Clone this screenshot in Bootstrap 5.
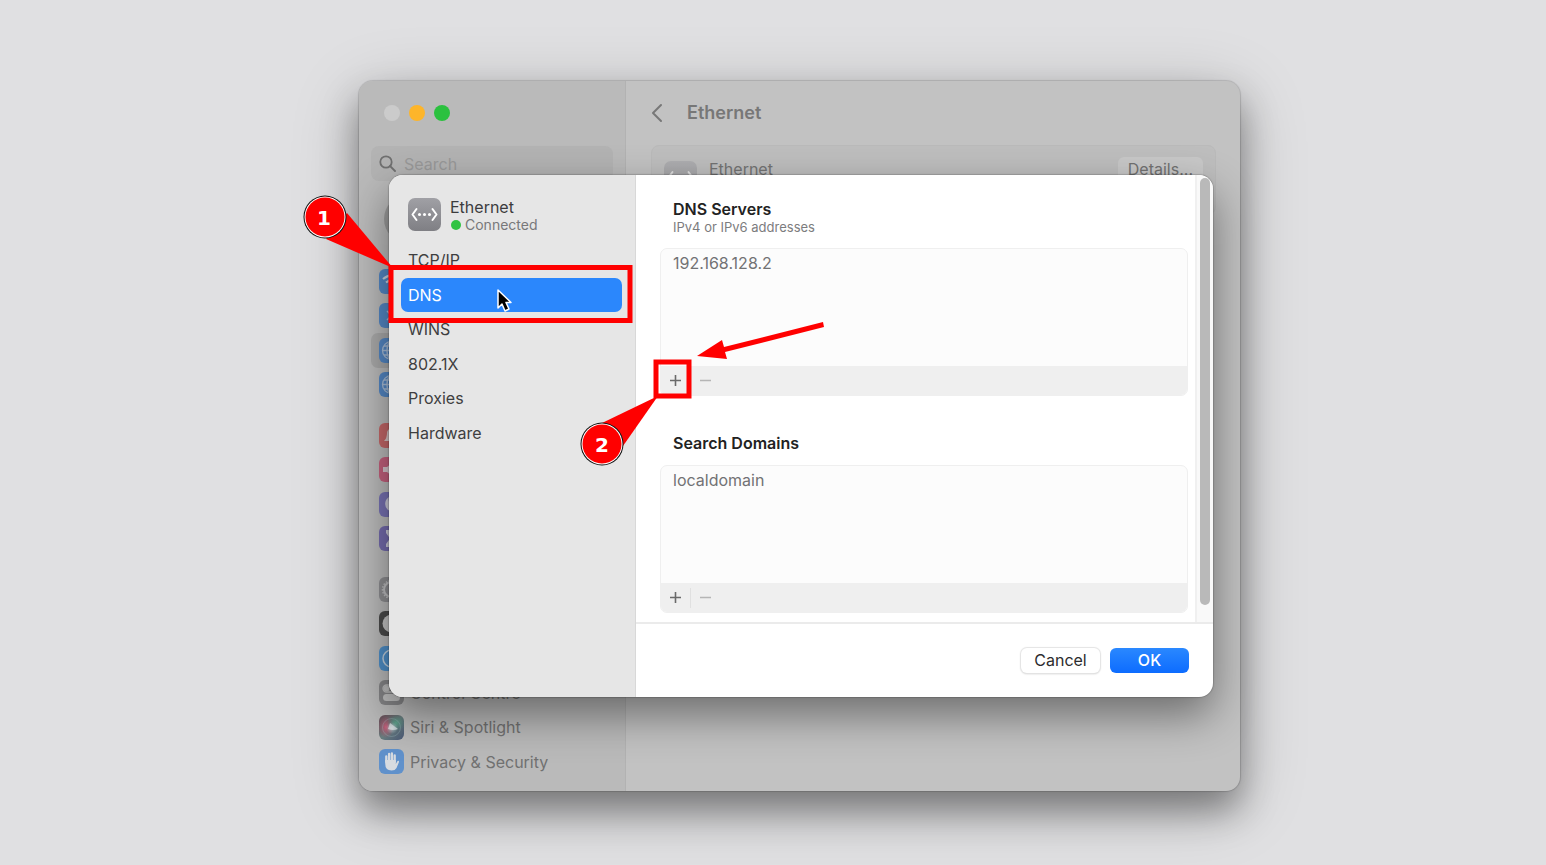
<!DOCTYPE html>
<html lang="en">
<head>
<meta charset="utf-8">
<meta name="viewport" content="width=device-width, initial-scale=1">
<title>Ethernet – DNS settings</title>
<link href="https://cdn.jsdelivr.net/npm/bootstrap@5.3.0/dist/css/bootstrap.min.css" rel="stylesheet">
<style>
body{font-family:Inter,"Liberation Sans",sans-serif;font-size:16px;line-height:20px;background:#e0e0e2;color:#3c3c3e}
.desktop{min-height:100vh;padding:81px 0 74px 53px}
.window{max-width:881px;border-radius:14px;background:#c2c2c2;box-shadow:0 0 1px 1px rgba(0,0,0,.14),0 20px 36px rgba(0,0,0,.38),0 14px 70px rgba(0,0,0,.2);color:#737373}
.side{width:267px;background:#bababa;border-right:1px solid #b2b2b2;border-radius:14px 0 0 14px;padding:24px 12px 12px 12px}
.lights{padding:0 0 0 13px;gap:9px}
.lights button{width:16px;height:16px;border:0;border-radius:50%;padding:0}
.lights .l-close{background:#cbcbcb}.lights .l-min{background:#fdb52a}.lights .l-zoom{background:#2bc13f}
.search{height:35px;margin-top:25px;padding:0 8px;gap:4px;background:#b3b3b3;border-radius:8px}
.search input,.search input:focus{background:none;border:0;box-shadow:none;padding:0 4px;font-size:16px;line-height:20px;color:#737373}
.search input::placeholder{color:#999;opacity:1}
.avatar{width:48px;height:48px;margin:14px 0 21px 13px;border-radius:50%;background:#999}
.group-4,.group-6{display:flex;flex-direction:column}
.group-4{height:138px;margin-bottom:16px}
.group-6{height:207px}
.group-4 a,.group-6 a{flex:1;display:flex;align-items:center;gap:6px;padding-left:8px;color:#717171;text-decoration:none;border-radius:7px}
.group-4 a.current{background:#a9a9a9}
.ico{width:25px;height:25px;flex:none}
.pane{padding:20px 24px 20px 25px}
.pane-title{font-size:18px;line-height:24px;font-weight:600;color:#777;margin:0}
.service{margin-top:20px;height:70px;border-radius:8px;background:#bebebe;border:1px solid #bababa;padding:11px 12px}
.service .name{margin:2px 0 0 12px}
.btn-details{background:#c8c8c8;border:0;border-radius:6px;height:24px;padding:0 10px;font-size:16px;line-height:24px;color:#727272}
.sheet{position:absolute;inset:94px 27px 94px 30px;border-radius:14px;background:#fff;color:#3c3c3e;box-shadow:0 0 1px 1px rgba(0,0,0,.16),0 18px 44px rgba(0,0,0,.44)}
.sheet-side{width:247px;background:#e6e6e6;border-right:1px solid #d8d8d8;padding:23px 13px 0 12px}
.sheet-head{padding:0 7px;height:45px;gap:9px}
.sheet-head .who{margin-top:-1px}
.sheet-head .state{font-size:14px;line-height:16px;color:#78787a}
.dot{width:10px;height:10px;border-radius:50%;background:#30c342;margin-left:1px}
.tabs-col{height:207px}
.tabs-col button{flex:1;border:0;background:none;text-align:left;padding:0 7px;border-radius:7px;color:#3e3e40}
.tabs-col button.active{background:#2b87fc;color:#fff}
.content{padding:24px 7px 9px 24px}
.content h2{font-size:16px;line-height:20px;font-weight:600;color:#222;margin:0 0 0 13px}
.content .hint{font-size:13px;line-height:16px;color:#7c7c7e;margin:0 0 13px 13px}
.listbox{border:1px solid #efefef;border-radius:7px;background:#fcfcfc;overflow:hidden}
.listbox ul{height:117px;margin:0;padding:4px 12px;color:#727274}
.listbox .tools{height:29px;background:#efefef}
.tools button{width:29px;border:0;background:none;padding:0;color:#6a6a6a;display:grid;place-items:center}
.tools button~button{color:#b5b5b5}
.tools .rule{width:1px;height:20px;background:#e0e0e0}
.second{margin-top:37px}
.second .listbox{margin-top:12px}
.track{width:18px;background:#f9f9f9;border-left:2px solid #f0f0f0;border-radius:0 14px 0 0;padding:3px 3px 17px 3px}
.thumb{width:10px;height:100%;border-radius:5px;background:#b9b9b9}
.actions{border-top:2px solid #ebebeb;height:75px;padding:0 24px 0 0;gap:10px}
.actions .btn{width:79px;height:25px;padding:0;font-size:16px;line-height:23px;border-radius:6px;border:0}
.b-cancel,.b-cancel:hover{background:#fff;color:#2c2c2e;box-shadow:0 0 1px 1px #e4e4e4,0 1px 2px rgba(0,0,0,.2)}
.actions .b-ok,.b-ok:hover{background:linear-gradient(#2a88ff,#0d6cff);color:#fff;font-weight:500}
.notes{position:absolute;left:0;top:0;overflow:visible;pointer-events:none}
.notes text{font:bold 20px "DejaVu Sans",sans-serif;fill:#fff;text-anchor:middle}
</style>
</head>
<body>
<svg width="0" height="0" class="position-absolute" aria-hidden="true">
  <defs>
    <linearGradient id="gray" x2="0" y2="1"><stop stop-color="#a0a0a5"/><stop offset="1" stop-color="#7f7f84"/></linearGradient>
    <linearGradient id="siri" x2="1" y2="1"><stop stop-color="#6b4a55"/><stop offset=".5" stop-color="#6a7f80"/><stop offset="1" stop-color="#4b5a78"/></linearGradient>
    <radialGradient id="pink"><stop stop-color="#c9607c"/><stop offset="1" stop-color="#b54c68" stop-opacity="0"/></radialGradient>
    <radialGradient id="teal"><stop stop-color="#5fa58c"/><stop offset="1" stop-color="#4f8c80" stop-opacity="0"/></radialGradient>
    <radialGradient id="glow"><stop stop-color="#e6eaec"/><stop offset="1" stop-color="#b9c9d4" stop-opacity="0"/></radialGradient>
    <symbol id="eth" viewBox="0 0 33 33"><rect width="33" height="33" rx="7" fill="url(#gray)"/><path d="M8.500 11 4.500 16.500 8.500 22M24.500 11l4 5.500-4 5.500" fill="none" stroke="#fff" stroke-width="2" stroke-linecap="round" stroke-linejoin="round"/><g fill="#fff"><circle cx="11.500" cy="16.500" r="1.500"/><circle cx="16.500" cy="16.500" r="1.500"/><circle cx="21.500" cy="16.500" r="1.500"/></g></symbol>
    <symbol id="globe" viewBox="0 0 25 25"><rect width="25" height="25" rx="6" fill="#5487c4"/><g fill="none" stroke="#a9bdd6" stroke-width="1.300"><circle cx="12.500" cy="12.500" r="9"/><ellipse cx="12.500" cy="12.500" rx="4.500" ry="9"/><path d="M3.500 12.500h18M5 8h15M5 17h15M12.500 3.500v18"/></g></symbol>
  </defs>
</svg>
<main class="desktop d-flex justify-content-center align-items-start">
  <div class="window w-100 position-relative d-flex">
    <aside class="side flex-shrink-0">
      <div class="lights d-flex">
        <button class="l-close" aria-label="Close"></button><button class="l-min" aria-label="Minimise"></button><button class="l-zoom" aria-label="Zoom"></button>
      </div>
      <div class="search d-flex align-items-center">
        <svg width="17" height="17" viewBox="0 0 17 17" class="flex-shrink-0" fill="none" stroke="#707070" stroke-width="1.800" stroke-linecap="round"><circle cx="7" cy="7" r="5.700"/><path d="m11 11 5 5"/></svg>
        <input class="form-control" type="search" placeholder="Search" aria-label="Search settings">
      </div>
      <div class="avatar"></div>
      <nav class="group-4" aria-label="Network">
        <a href="#" aria-label="Wi-Fi"><svg class="ico" viewBox="0 0 25 25"><rect width="25" height="25" rx="6" fill="#5487c4"/><path d="M4 10q8.500-7 17 0M7 13.500q5.500-4.500 11 0" fill="none" stroke="#c9d3df" stroke-width="2.200"/><circle cx="12.500" cy="17" r="2" fill="#c9d3df"/></svg></a>
        <a href="#" aria-label="Bluetooth"><svg class="ico" viewBox="0 0 25 25"><rect width="25" height="25" rx="6" fill="#5487c4"/><path d="m8 8 9 9-4.500 4V4L17 8l-9 9" fill="none" stroke="#a9bdd6" stroke-width="1.500"/></svg></a>
        <a href="#" class="current" aria-label="Network"><svg class="ico"><use href="#globe"/></svg></a>
        <a href="#" aria-label="VPN"><svg class="ico"><use href="#globe"/></svg></a>
      </nav>
      <nav class="group-4" aria-label="Alerts">
        <a href="#" aria-label="Notifications"><svg class="ico" viewBox="0 0 25 25"><rect width="25" height="25" rx="6" fill="#c46768"/><path d="M5 18q3-3 3-8a4.500 4.500 0 0 1 9 0q0 5 3 8z" fill="#d6c5c5"/></svg></a>
        <a href="#" aria-label="Sound"><svg class="ico" viewBox="0 0 25 25"><rect width="25" height="25" rx="6" fill="#c4607d"/><path d="M4 10h4l6-5v15l-6-5H4z" fill="#d6c5cc"/></svg></a>
        <a href="#" aria-label="Focus"><svg class="ico" viewBox="0 0 25 25"><rect width="25" height="25" rx="6" fill="#7772b3"/><path d="M10 5a8 8 0 1 0 11 11A9 9 0 0 1 10 5" fill="#c9c8d6"/></svg></a>
        <a href="#" aria-label="Screen Time"><svg class="ico" viewBox="0 0 25 25"><rect width="25" height="25" rx="6" fill="#746bad"/><path d="M7 4h11v3l-4 5.500 4 5.500v3H7v-3l4-5.500L7 7z" fill="#c9c8d6"/></svg></a>
      </nav>
      <nav class="group-6" aria-label="System">
        <a href="#" aria-label="General"><svg class="ico" viewBox="0 0 25 25"><rect width="25" height="25" rx="6" fill="#8d8d90"/><circle cx="12.500" cy="12.500" r="7.500" fill="none" stroke="#bdbdbf" stroke-width="2"/><circle cx="12.500" cy="12.500" r="9" fill="none" stroke="#bdbdbf" stroke-width="1.500" stroke-dasharray="1.500 1.500"/></svg></a>
        <a href="#" aria-label="Appearance"><svg class="ico" viewBox="0 0 25 25"><rect width="25" height="25" rx="6" fill="#4b4b4b"/><circle cx="12.500" cy="12.500" r="9" fill="#c4c4c4"/><path d="M12.500 5a7.500 7.500 0 0 1 0 15z" fill="#4b4b4b"/></svg></a>
        <a href="#" aria-label="Accessibility"><svg class="ico" viewBox="0 0 25 25"><rect width="25" height="25" rx="6" fill="#4f8fc8"/><circle cx="12.500" cy="12.500" r="8.500" fill="none" stroke="#c1d0dd" stroke-width="1.500"/></svg></a>
        <a href="#"><svg class="ico" viewBox="0 0 25 25"><rect width="25" height="25" rx="6" fill="#858587"/><rect x="4" y="5" width="17" height="7" rx="3.500" fill="none" stroke="#bcbcbc" stroke-width="1.300"/><circle cx="7.500" cy="8.500" r="3" fill="#bcbcbc"/><rect x="4" y="14" width="17" height="7" rx="3.500" fill="#c0c0c0"/></svg>Control Centre</a>
        <a href="#"><svg class="ico" viewBox="0 0 25 25"><rect width="25" height="25" rx="6" fill="url(#siri)"/><ellipse cx="7" cy="12" rx="8" ry="11" fill="url(#pink)"/><ellipse cx="17" cy="8" rx="9" ry="8" fill="url(#teal)"/><circle cx="12.500" cy="12.500" r="9" fill="none" stroke="#9fb6bd" stroke-width="1" opacity=".35"/><circle cx="13" cy="13" r="6" fill="url(#glow)" opacity=".7"/><path d="m11 8 8 6q-5 2-10 0z" fill="#dfe5e8" opacity=".75"/></svg>Siri &amp; Spotlight</a>
        <a href="#"><svg class="ico" viewBox="0 0 25 25"><rect width="25" height="25" rx="6" fill="#6091cb"/><path d="M7.300 13V7.500M10.100 12V5M12.900 12V4.500M15.700 13V6.500" stroke="#d7dbe0" stroke-width="2.300" stroke-linecap="round"/><path d="M6.200 11h10.600v4l1.700-3q1.700-.8 1.500 1l-2.500 6q-1.300 2.500-5 2.500-6.300 0-6.300-7z" fill="#d7dbe0"/></svg>Privacy &amp; Security</a>
      </nav>
    </aside>
    <section class="pane flex-grow-1">
      <div class="d-flex align-items-center gap-4">
        <svg width="12" height="20" viewBox="0 0 12 20" fill="none" stroke="#777" stroke-width="2" stroke-linecap="round" stroke-linejoin="round"><path d="m10 2-8 8 8 8"/></svg>
        <h1 class="pane-title">Ethernet</h1>
      </div>
      <div class="service d-flex align-items-start">
        <svg width="33" height="33" opacity=".5" class="mt-1"><use href="#eth"/></svg>
        <span class="name">Ethernet</span>
        <button class="btn-details ms-auto">Details...</button>
      </div>
    </section>

    <div class="sheet d-flex overflow-hidden" role="dialog" aria-label="Ethernet details">
      <div class="sheet-side flex-shrink-0">
        <div class="sheet-head d-flex align-items-start">
          <svg width="33" height="33" class="flex-shrink-0"><use href="#eth"/></svg>
          <div class="who">
            <div>Ethernet</div>
            <div class="state d-flex align-items-center gap-1"><span class="dot"></span>Connected</div>
          </div>
        </div>
        <nav class="tabs-col d-flex flex-column">
          <button>TCP/IP</button><button class="active">DNS</button><button>WINS</button><button>802.1X</button><button>Proxies</button><button>Hardware</button>
        </nav>
      </div>
      <div class="d-flex flex-column flex-grow-1">
        <div class="d-flex flex-grow-1">
          <div class="content flex-grow-1">
            <h2>DNS Servers</h2>
            <p class="hint">IPv4 or IPv6 addresses</p>
            <div class="listbox">
              <ul class="list-unstyled"><li>192.168.128.2</li></ul>
              <div class="tools d-flex align-items-center"><button aria-label="Add DNS server"><svg width="11" height="11" stroke="currentColor" stroke-width="1.600"><path d="M0 5.500h11M5.500 0v11"/></svg></button><span class="rule"></span><button aria-label="Remove DNS server"><svg width="11" height="11" stroke="currentColor" stroke-width="1.600"><path d="M0 5.500h11"/></svg></button></div>
            </div>
            <div class="second">
              <h2>Search Domains</h2>
              <div class="listbox">
                <ul class="list-unstyled"><li>localdomain</li></ul>
                <div class="tools d-flex align-items-center"><button aria-label="Add search domain"><svg width="11" height="11" stroke="currentColor" stroke-width="1.600"><path d="M0 5.500h11M5.500 0v11"/></svg></button><span class="rule"></span><button aria-label="Remove search domain"><svg width="11" height="11" stroke="currentColor" stroke-width="1.600"><path d="M0 5.500h11"/></svg></button></div>
              </div>
            </div>
          </div>
          <div class="track"><div class="thumb"></div></div>
        </div>
        <div class="actions d-flex align-items-center justify-content-end">
          <button class="btn b-cancel">Cancel</button><button class="btn b-ok">OK</button>
        </div>
      </div>
    </div>

    <svg class="notes" width="881" height="710" viewBox="359 81 881 710">
      <g fill="#f00">
        <path d="M347 213 393 268 326 239z"/><path d="M602 423 658 396 623 446z"/>
        <path d="m697 356 25-16 2 7 99-25 1 5-99 25 2 7z"/>
      </g>
      <g fill="none" stroke="#f00" stroke-width="5"><rect x="391" y="267.500" width="239" height="53"/><rect x="656" y="362" width="33" height="34"/></g>
      <g fill="#f00"><circle cx="325" cy="217" r="21.500" fill="#111"/><circle cx="325" cy="217" r="20.500" fill="#fff"/><circle cx="325" cy="217" r="19.500"/><circle cx="602" cy="444" r="21.500" fill="#111"/><circle cx="602" cy="444" r="20.500" fill="#fff"/><circle cx="602" cy="444" r="19.500"/></g>
      <text x="324" y="225">1</text><text x="602" y="452">2</text>
      <path d="M498 290v18l4-4 3 7 4-2-3-6.500h5z" fill="#000" stroke="#fff" stroke-width="1.500" stroke-linejoin="round"/>
    </svg>
  </div>
</main>
<script src="https://cdn.jsdelivr.net/npm/bootstrap@5.3.0/dist/js/bootstrap.bundle.min.js"></script>
</body>
</html>
